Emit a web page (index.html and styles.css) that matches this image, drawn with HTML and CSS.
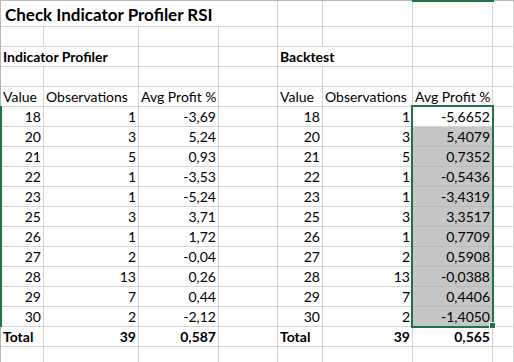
FILE: index.html
```html
<!DOCTYPE html>
<html>
<head>
<meta charset="utf-8">
<link rel="stylesheet" href="styles.css">
</head>
<body>
<div class="sheet">
  <div class="c title span4">Check Indicator Profiler RSI</div><div class="c"></div><div class="c"></div><div class="c"></div><div class="c"></div>
  <div class="c"></div><div class="c"></div><div class="c"></div><div class="c"></div><div class="c"></div><div class="c"></div><div class="c"></div><div class="c"></div>
  <div class="c b span2">Indicator Profiler</div><div class="c"></div><div class="c"></div><div class="c b span2">Backtest</div><div class="c"></div><div class="c"></div>
  <div class="c"></div><div class="c"></div><div class="c"></div><div class="c"></div><div class="c"></div><div class="c"></div><div class="c"></div><div class="c"></div>
  <div class="c">Value</div><div class="c">Observations</div><div class="c">Avg Profit %</div><div class="c"></div><div class="c">Value</div><div class="c">Observations</div><div class="c">Avg Profit %</div><div class="c"></div>

  <div class="c r">18</div><div class="c r">1</div><div class="c r">-3,69</div><div class="c"></div><div class="c r">18</div><div class="c r">1</div><div class="c r">-5,6652</div><div class="c"></div>
  <div class="c r">20</div><div class="c r">3</div><div class="c r">5,24</div><div class="c"></div><div class="c r">20</div><div class="c r">3</div><div class="c r sel">5,4079</div><div class="c"></div>
  <div class="c r">21</div><div class="c r">5</div><div class="c r">0,93</div><div class="c"></div><div class="c r">21</div><div class="c r">5</div><div class="c r sel">0,7352</div><div class="c"></div>
  <div class="c r">22</div><div class="c r">1</div><div class="c r">-3,53</div><div class="c"></div><div class="c r">22</div><div class="c r">1</div><div class="c r sel">-0,5436</div><div class="c"></div>
  <div class="c r">23</div><div class="c r">1</div><div class="c r">-5,24</div><div class="c"></div><div class="c r">23</div><div class="c r">1</div><div class="c r sel">-3,4319</div><div class="c"></div>
  <div class="c r">25</div><div class="c r">3</div><div class="c r">3,71</div><div class="c"></div><div class="c r">25</div><div class="c r">3</div><div class="c r sel">3,3517</div><div class="c"></div>
  <div class="c r">26</div><div class="c r">1</div><div class="c r">1,72</div><div class="c"></div><div class="c r">26</div><div class="c r">1</div><div class="c r sel">0,7709</div><div class="c"></div>
  <div class="c r">27</div><div class="c r">2</div><div class="c r">-0,04</div><div class="c"></div><div class="c r">27</div><div class="c r">2</div><div class="c r sel">0,5908</div><div class="c"></div>
  <div class="c r">28</div><div class="c r">13</div><div class="c r">0,26</div><div class="c"></div><div class="c r">28</div><div class="c r">13</div><div class="c r sel">-0,0388</div><div class="c"></div>
  <div class="c r">29</div><div class="c r">7</div><div class="c r">0,44</div><div class="c"></div><div class="c r">29</div><div class="c r">7</div><div class="c r sel">0,4406</div><div class="c"></div>
  <div class="c r">30</div><div class="c r">2</div><div class="c r">-2,12</div><div class="c"></div><div class="c r">30</div><div class="c r">2</div><div class="c r sel">-1,4050</div><div class="c"></div>
  <div class="c b">Total</div><div class="c r b">39</div><div class="c r b">0,587</div><div class="c"></div><div class="c b">Total</div><div class="c r b">39</div><div class="c r b">0,565</div><div class="c"></div>
  <div class="c"></div><div class="c"></div><div class="c"></div><div class="c"></div><div class="c"></div><div class="c"></div><div class="c"></div><div class="c"></div>

  <div class="colmark"></div>
  <div class="rowmark"></div>
  <div class="selbox"></div>
  <div class="handle"></div>
</div>
</body>
</html>
```
FILE: styles.css
```css
html, body {
  margin: 0;
  padding: 0;
  background: #ffffff;
  overflow: hidden;
}
.sheet {
  position: relative;
  display: grid;
  grid-template-columns: 43px 95px 80px 59px 45px 90px 80px 21px;
  grid-template-rows: 26px;
  grid-auto-rows: 20px;
  border-top: 1px solid #b8b8b8;
  border-left: 1px solid #b8b8b8;
  font-family: Lato, "Liberation Sans", sans-serif;
  font-size: 14px;
  color: #000;
}
.c {
  box-sizing: border-box;
  border-right: 1px solid #d4d4d4;
  border-bottom: 1px solid #d4d4d4;
  padding: 0 2px;
  line-height: 19px;
  white-space: nowrap;
  overflow: visible;
}
.r { text-align: right; }
.b { font-weight: bold; }
.span2 { grid-column: span 2; }
.span4 { grid-column: span 4; }
.title {
  font-size: 17px;
  font-weight: bold;
  line-height: 27px;
  padding-left: 4px;
}
.sel {
  background: #c6c6c6;
  border-bottom-color: #bababa;
}
.colmark {
  position: absolute;
  left: 411px;
  top: -1px;
  width: 82px;
  height: 2px;
  background: #217346;
}
.rowmark {
  position: absolute;
  left: -1px;
  top: 105px;
  width: 2px;
  height: 221px;
  background: #217346;
}
.selbox {
  position: absolute;
  left: 410px;
  top: 104px;
  width: 83px;
  height: 223px;
  box-sizing: border-box;
  border: 2px solid #217346;
}
.handle {
  position: absolute;
  left: 488px;
  top: 321px;
  width: 7px;
  height: 7px;
  box-sizing: border-box;
  background: #217346;
  border: 1px solid #ffffff;
}
```
